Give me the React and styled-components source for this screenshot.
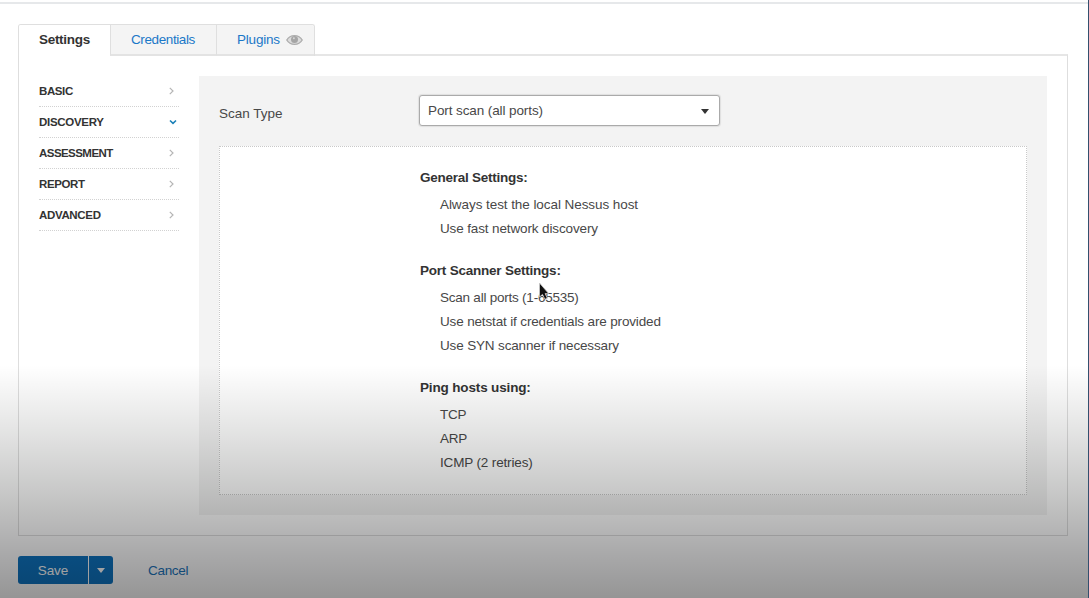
import React from "react";
import styled, { createGlobalStyle } from "styled-components";

const GlobalStyle = createGlobalStyle`
  * { box-sizing: border-box; }
  body { margin: 0; background: #fff; overflow: hidden; }
  body, button { font-family: "Liberation Sans", Arial, Helvetica, sans-serif; }
`;

const Frame = styled.div`
  width: 1089px;
  height: 598px;
  display: flex;
  flex-direction: column;
  border-right: 1px solid #33506e;
  position: relative;
  overflow: hidden;
  background: #fff;
`;

const TopRule = styled.div`
  height: 2px;
  margin-top: 2px;
  background: #e6e8ea;
  flex: none;
`;

const Body = styled.main`
  padding: 20px 20px 0 18px;
  display: flex;
  flex-direction: column;
  color: #484848;
  font-size: 13.5px;
  line-height: 20px;
`;

const Tabs = styled.nav`
  display: flex;
  height: 32px;
  margin-bottom: -2px;
  align-self: flex-start;
  position: relative;
  border: 1px solid #dfdfdf;
  border-bottom: 0;
  border-radius: 3px 3px 0 0;
  overflow: hidden;
`;

const Tab = styled.a`
  display: flex;
  align-items: center;
  width: ${(p) => p.$width}px;
  padding: ${(p) => (p.$active ? "0 0 2px 20px" : "1px 0 0 20px")};
  letter-spacing: ${(p) => p.$spacing}px;
  background: ${(p) => (p.$active ? "#fff" : "#f4f4f4")};
  color: ${(p) => (p.$active ? "#333" : "#1b78c8")};
  font-weight: ${(p) => (p.$active ? 700 : 400)};
  border-left: ${(p) => (p.$active ? 0 : 1)}px solid #dfdfdf;
  border-bottom: ${(p) => (p.$active ? 0 : 2)}px solid #e3e3e3;
  svg { margin-left: 6px; }
`;

const Panel = styled.section`
  display: flex;
  height: 482px;
  padding: 20px;
  border: 1px solid #dedede;
  border-top: 2px solid #e6e6e6;
`;

const SideNav = styled.ul`
  list-style: none;
  margin: 0 20px 0 0;
  padding: 0;
  width: 140px;
  flex: none;
`;

const SideItem = styled.li`
  display: flex;
  align-items: center;
  justify-content: space-between;
  height: 31px;
  padding: 0 ${(p) => (p.$open ? 2 : 5)}px 1px 0;
  border-bottom: 1px dotted #d2d2d2;
  color: #333;
  font-size: 11.5px;
  font-weight: 700;
  letter-spacing: ${(p) => p.$spacing}px;
`;

const Content = styled.div`
  flex: 1;
  background: #f3f3f3;
  padding: 19px 20px 20px;
`;

const Field = styled.div`
  display: flex;
  height: 51px;
`;

const Label = styled.label`
  width: 200px;
  padding-top: 9px;
`;

const Select = styled.div`
  display: flex;
  align-items: center;
  justify-content: space-between;
  width: 301px;
  height: 31px;
  padding: 1px 10px 0 8px;
  background: #fff;
  border: 1px solid #aaa;
  border-radius: 3px;
  box-shadow: 0 0 1px 1px rgba(0, 0, 0, 0.08);
  letter-spacing: -0.1px;
`;

const Caret = styled.i`
  border: 4.5px solid transparent;
  border-top: 5px solid ${(p) => p.$color};
  border-bottom: 0;
`;

const Summary = styled.div`
  height: 349px;
  padding: 21px 0 0 200px;
  background: #fff;
  border: 1px dotted #c9c9c9;
`;

const Group = styled.section`
  margin-bottom: 20px;
`;

const GroupTitle = styled.h3`
  margin: 0 0 5px;
  font-size: 13.5px;
  line-height: 20px;
  color: #333;
  letter-spacing: ${(p) => p.$spacing}px;
`;

const Line = styled.div`
  padding-left: 20px;
  line-height: 24px;
  letter-spacing: ${(p) => p.$spacing}px;
`;

const Actions = styled.footer`
  display: flex;
  align-items: center;
  margin-top: 20px;
  height: 28px;
`;

const SaveButton = styled.button`
  width: 70px;
  height: 28px;
  padding: 1px 0 0;
  border: 0;
  border-radius: 3px 0 0 3px;
  background: #0e74c0;
  color: #fff;
  font-size: 13.5px;
  letter-spacing: -0.1px;
`;

const MoreButton = styled(SaveButton)`
  display: flex;
  align-items: center;
  justify-content: center;
  width: 24px;
  margin-left: 1px;
  border-radius: 0 3px 3px 0;
`;

const CancelLink = styled.a`
  margin-left: 35px;
  padding-top: 2px;
  color: #1b75bc;
  letter-spacing: -0.3px;
`;

const Shade = styled.div`
  position: absolute;
  inset: 365px 0 0 0;
  pointer-events: none;
  background: linear-gradient(rgba(0, 4, 0, 0), rgba(0, 3, 0, 0.105) 28%, rgba(0, 3, 0, 0.22) 55%, rgba(0, 0, 3, 0.34) 82%, rgba(0, 0, 0, 0.415));
`;

const Pointer = styled.svg`
  position: absolute;
  left: 538px;
  top: 282px;
`;

const Chevron = ({ open }) =>
  open ? (
    <svg width="8" height="6" viewBox="0 0 8 6" fill="none" stroke="#1b80b8" strokeWidth="1.6">
      <path d="M1 1.5 4 4.4 7 1.5" />
    </svg>
  ) : (
    <svg width="5" height="8" viewBox="0 0 5 8" fill="none" stroke="#b5b5b5" strokeWidth="1.2">
      <path d="M.8 .8 4 4 .8 7.2" />
    </svg>
  );

const Eye = () => (
  <svg width="17" height="12" viewBox="0 0 17 12">
    <path d="M.8 6C4.2.2 12.8.2 16.2 6 12.8 11.8 4.2 11.8.8 6Z" fill="#dcdcdc" stroke="#adadad" strokeWidth="1.4" />
    <circle cx="8.5" cy="5.6" r="3.5" fill="#a5a5a5" />
    <circle cx="7.9" cy="4.2" r="1" fill="#d4d4d4" />
  </svg>
);

const sections = [
  { name: "BASIC", spacing: -0.4 },
  { name: "DISCOVERY", spacing: -0.3, open: true },
  { name: "ASSESSMENT", spacing: -0.55 },
  { name: "REPORT", spacing: -0.4 },
  { name: "ADVANCED", spacing: -0.34 },
];

const groups = [
  {
    title: "General Settings:",
    spacing: -0.25,
    lines: [["Always test the local Nessus host", -0.07], ["Use fast network discovery", -0.13]],
  },
  {
    title: "Port Scanner Settings:",
    spacing: -0.22,
    lines: [["Scan all ports (1-65535)", -0.23], ["Use netstat if credentials are provided", -0.15], ["Use SYN scanner if necessary", -0.15]],
  },
  {
    title: "Ping hosts using:",
    spacing: -0.15,
    lines: [["TCP", -0.2], ["ARP", -0.2], ["ICMP (2 retries)", -0.15]],
  },
];

export default function App() {
  return (
    <Frame>
      <GlobalStyle />
      <TopRule />
      <Body>
        <Tabs>
          <Tab $active $width={91} $spacing={-0.3}>Settings</Tab>
          <Tab $width={106} $spacing={-0.4}>Credentials</Tab>
          <Tab $width={98} $spacing={-0.2}>Plugins<Eye /></Tab>
        </Tabs>
        <Panel>
          <SideNav>
            {sections.map((s) => (
              <SideItem key={s.name} $open={s.open} $spacing={s.spacing}>
                {s.name}
                <Chevron open={s.open} />
              </SideItem>
            ))}
          </SideNav>
          <Content>
            <Field>
              <Label>Scan Type</Label>
              <Select>
                Port scan (all ports)
                <Caret $color="#333" />
              </Select>
            </Field>
            <Summary>
              {groups.map((g) => (
                <Group key={g.title}>
                  <GroupTitle $spacing={g.spacing}>{g.title}</GroupTitle>
                  {g.lines.map(([text, spacing]) => (
                    <Line key={text} $spacing={spacing}>{text}</Line>
                  ))}
                </Group>
              ))}
            </Summary>
          </Content>
        </Panel>
        <Actions>
          <SaveButton>Save</SaveButton>
          <MoreButton aria-label="More save options"><Caret $color="#fff" /></MoreButton>
          <CancelLink>Cancel</CancelLink>
        </Actions>
      </Body>
      <Shade />
      <Pointer width="14" height="20" viewBox="0 0 14 20">
        <path d="M1.5 1v14l3-2.6 2.4 4.9 2.4-1.1-2.2-4.6h3.6Z" fill="#111" stroke="#ccc" strokeWidth=".8" />
      </Pointer>
    </Frame>
  );
}
